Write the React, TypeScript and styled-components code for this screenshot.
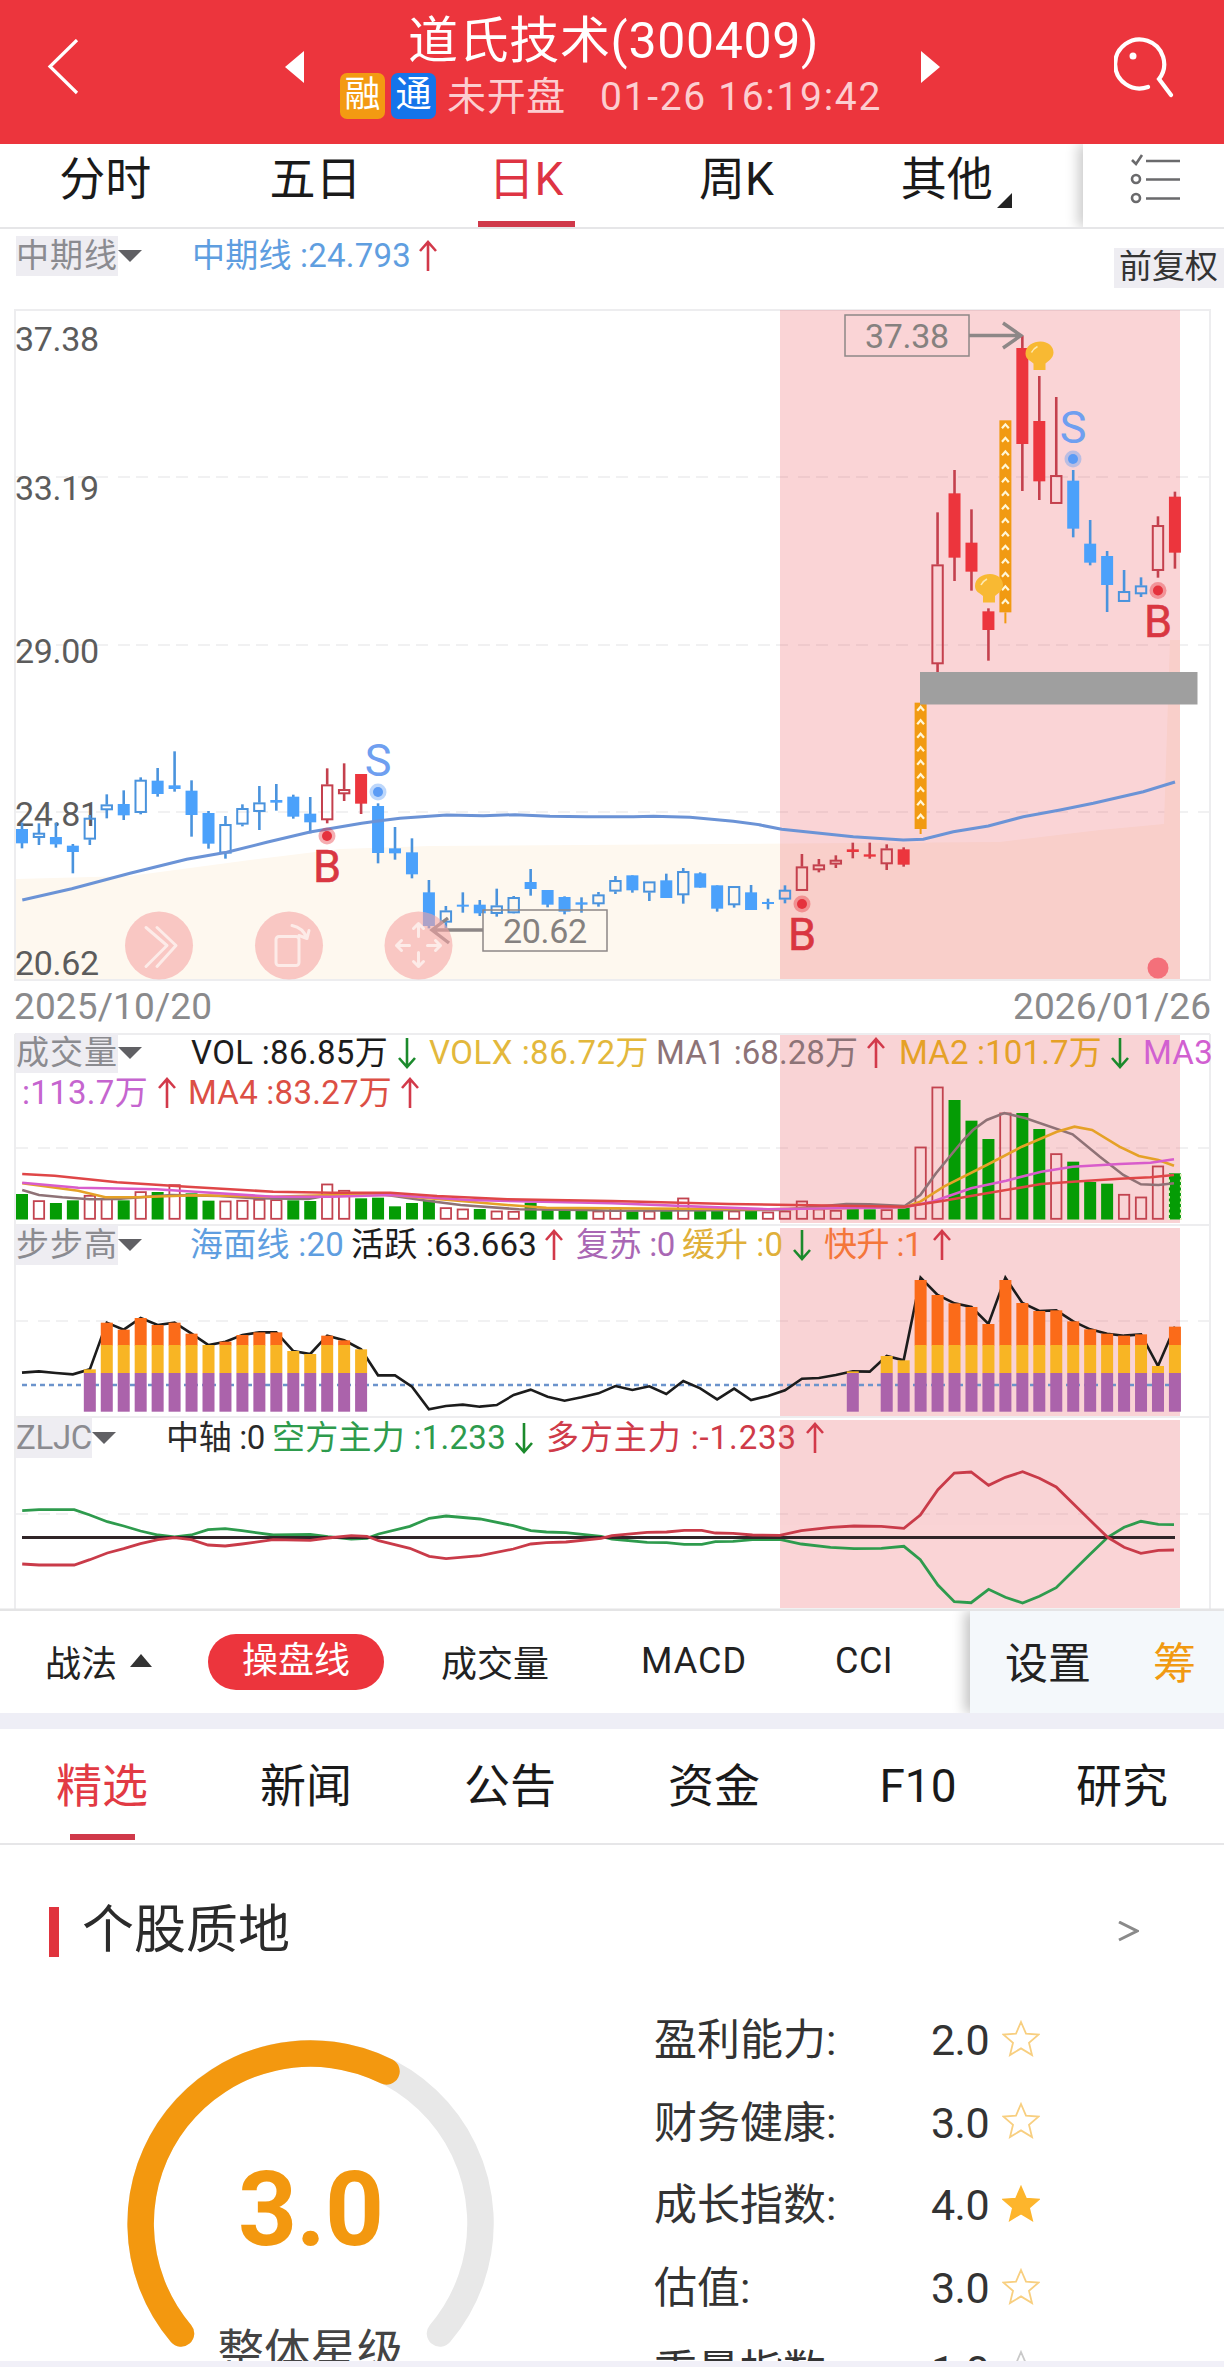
import React, { useLayoutEffect, useRef } from 'react';
import styled, { createGlobalStyle } from 'styled-components';

const GlobalStyle = createGlobalStyle`
  * { box-sizing: border-box; }
  body {
    margin: 0;
    background: #fff;
    color: #1c1c1c;
    font-family: Roboto, "Noto Sans CJK SC", sans-serif;
  }
  svg { display: block; }
`;

const RED = '#ec353d';
const LINE_RED = '#c93b49';
const BLUE = '#4ba1fb';
const GOLD = '#f19a12';
const GREEN = '#059c05';

/* ---------- text that spreads its letters over a given width ---------- */

const FitSpan = styled.span<{ $w: number; $after?: number }>`
  display: inline-block;
  flex: none;
  width: ${p => p.$w}px;
  margin-right: ${p => p.$after ?? 0}px;
  white-space: pre;
`;

function Fit({ w, after, children }: { w: number; after?: number; children: string }) {
  const inner = useRef<HTMLSpanElement>(null);
  useLayoutEffect(() => {
    const el = inner.current;
    if (!el) return;
    el.style.letterSpacing = '0px';
    const natural = el.getBoundingClientRect().width;
    el.style.letterSpacing = `${(w - natural) / children.length}px`;
  }, [w, children]);
  return (
    <FitSpan $w={w} $after={after}>
      <span ref={inner}>{children}</span>
    </FitSpan>
  );
}

/* ---------- page frame ---------- */

const Page = styled.main`
  width: 1224px;
  height: 2367px;
  overflow: hidden;
  display: flex;
  flex-direction: column;
  background: #fff;
`;

/* ---------- header ---------- */

const Header = styled.header`
  height: 144px;
  flex: none;
  background: ${RED};
  color: #fff;
  display: grid;
  grid-template-columns: 285px 19px 617px 19px 1fr;
`;

const HeaderBack = styled.div`
  padding: 39px 0 0 47px;
`;

const HeaderArrow = styled.div`
  padding-top: 51px;
`;

const HeaderCenter = styled.div`
  display: flex;
  flex-direction: column;
  padding-left: 36px;
`;

const StockTitle = styled.h1`
  margin: 6px 0 0 68px;
  font-size: 50px;
  line-height: 70px;
  height: 70px;
  font-weight: 400;
`;

const StatusRow = styled.div`
  display: flex;
  align-items: center;
  height: 46px;
  margin-top: -3px;
  font-size: 39px;
  line-height: 46px;
  color: #fccdd0;
`;

const Badge = styled.span<{ $bg: string }>`
  width: 45px;
  height: 46px;
  margin-right: 6px;
  border-radius: 7px;
  background: ${p => p.$bg};
  color: #fff;
  font-size: 36px;
  line-height: 45px;
  text-align: center;
`;

const StatusText = styled.span`
  display: flex;
  gap: 34px;
  margin-left: 5px;
  padding-top: 2px;
`;

const HeaderSearch = styled.div`
  padding: 35px 0 0 174px;
`;

/* ---------- period tabs ---------- */

const PeriodBar = styled.nav`
  height: 85px;
  flex: none;
  display: flex;
  border-bottom: 2px solid #e6e6e8;
`;

const PeriodTabs = styled.div`
  width: 1083px;
  display: flex;
  padding-right: 31px;
`;

const PeriodTab = styled.div<{ $on?: boolean }>`
  flex: 1;
  display: flex;
  flex-direction: column;
  align-items: center;
  justify-content: space-between;
  font-size: 46px;
  line-height: 70px;
  color: ${p => (p.$on ? '#de3443' : '#1a1a1a')};
  &::after {
    content: '';
    width: 97px;
    height: 6px;
    background: ${p => (p.$on ? '#d0394a' : 'transparent')};
  }
`;

const TabLabel = styled.span`
  position: relative;
`;

const Corner = styled.svg`
  position: absolute;
  left: 96px;
  top: 49px;
`;

const PeriodTools = styled.div`
  flex: 1;
  padding: 10px 0 0 47px;
  box-shadow: -5px 0 12px rgba(0, 0, 0, 0.2);
  clip-path: inset(0 0 0 -24px);
`;

/* ---------- chart area ---------- */

const ChartArea = styled.section`
  position: relative;
  height: 1382px;
  flex: none;
`;

const Drawing = styled.svg`
  position: absolute;
  left: 0;
  top: 0;
`;

const Legend = styled.div<{ $top: number; $pad: number }>`
  position: absolute;
  left: 0;
  top: ${p => p.$top}px;
  width: 1224px;
  height: 40px;
  padding-left: ${p => p.$pad}px;
  display: flex;
  align-items: center;
  font-size: 33px;
  line-height: 40px;
`;

const NameTag = styled.span<{ $w: number; $gap: number }>`
  display: flex;
  align-items: center;
  flex: none;
  width: ${p => p.$w}px;
  margin-right: ${p => p.$gap}px;
  height: 40px;
  background: #eeedf2;
  color: #8b8b90;
  white-space: nowrap;
`;

const TagCaret = styled.svg`
  flex: none;
`;

const Metric = styled.span<{ $c: string }>`
  display: flex;
  align-items: center;
  color: ${p => p.$c};
`;

const Adjust = styled.div`
  position: absolute;
  right: 0;
  top: 19px;
  width: 110px;
  height: 40px;
  padding-left: 5px;
  background: #eeedf2;
  color: #333;
  font-size: 33px;
  line-height: 38px;
`;

/* ---------- indicator bar ---------- */

const IndicatorBar = styled.nav`
  height: 102px;
  flex: none;
  display: flex;
  font-size: 36px;
  color: #222;
`;

const IndicatorList = styled.div`
  width: 970px;
  display: flex;
  align-items: center;
  padding-left: 45px;
`;

const Indicator = styled.span<{ $w: number }>`
  display: flex;
  align-items: center;
  gap: 13px;
  flex: none;
  width: ${p => p.$w}px;
  padding-bottom: 3px;
  white-space: nowrap;
`;

const Pill = styled.span`
  flex: none;
  width: 176px;
  height: 56px;
  margin-right: 57px;
  border-radius: 28px;
  background: ${RED};
  color: #fff;
  line-height: 54px;
  text-align: center;
`;

const IndicatorTools = styled.div`
  flex: 1;
  display: flex;
  align-items: center;
  gap: 62px;
  padding: 0 0 4px 35px;
  background: #f4f8fb;
  font-size: 43px;
  box-shadow: -5px 0 12px rgba(0, 0, 0, 0.24);
  clip-path: inset(0 0 0 -24px);
`;

const Chips = styled.span`
  color: ${GOLD};
`;

const Gap = styled.div`
  height: 16px;
  flex: none;
  background: #eeeef6;
`;

/* ---------- section tabs ---------- */

const SectionTabs = styled.nav`
  height: 116px;
  flex: none;
  display: flex;
  border-bottom: 2px solid #e6e6e8;
`;

const SectionTab = styled.div<{ $on?: boolean }>`
  flex: 1;
  display: flex;
  flex-direction: column;
  align-items: center;
  padding-top: 23px;
  font-size: 46px;
  line-height: 68px;
  color: ${p => (p.$on ? '#e23a44' : '#1a1a1a')};
  &::after {
    content: '';
    margin-top: 14px;
    width: 65px;
    height: 6px;
    background: ${p => (p.$on ? '#d0394a' : 'transparent')};
  }
`;

/* ---------- quality card ---------- */

const Quality = styled.section`
  height: 516px;
  flex: none;
  overflow: hidden;
`;

const QualityHead = styled.div`
  display: flex;
  align-items: center;
  height: 50px;
  margin: 62px 85px 0 49px;
`;

const Mark = styled.span`
  width: 10px;
  height: 50px;
  margin-right: 23px;
  background: #e0343e;
`;

const QualityTitle = styled.h2`
  margin: -3px 0 0;
  flex: 1;
  font-size: 52px;
  font-weight: 400;
  line-height: 50px;
  color: #2b2b2b;
`;

const QualityBody = styled.div`
  display: flex;
  padding: 40px 0 0 127px;
`;

const Gauge = styled.div`
  position: relative;
  width: 367px;
  height: 367px;
  margin-top: 43px;
  margin-right: 160px;
`;

const GaugeText = styled.div`
  position: absolute;
  inset: 0;
  display: flex;
  flex-direction: column;
  align-items: center;
`;

const Score = styled.strong`
  margin-top: 108px;
  font-size: 103px;
  line-height: 124px;
  font-weight: 700;
  letter-spacing: -1px;
  color: #f3980f;
`;

const ScoreName = styled.span`
  margin-top: 47px;
  font-size: 46.5px;
  line-height: 66px;
  color: #444;
`;

const ScoreList = styled.div`
  display: flex;
  flex-direction: column;
  padding-top: 2px;
  font-size: 43px;
  line-height: 83px;
  color: #333;
`;

const ScoreRow = styled.div`
  display: grid;
  grid-template-columns: 277px 71px 40px;
  align-items: center;
  height: 82.7px;
`;

const Star = styled.svg`
  margin-top: -4px;
`;

const BottomStrip = styled.div`
  flex: 1;
  background: #f1f0f8;
`;

/* ---------- chart data ---------- */

const cx = (i: number) => 22 + 16.955 * i;

type Kind = 'b' | 'bh' | 'r' | 'rh';
type Candle = [high: number, top: number, bottom: number, low: number, kind: Kind];

// Offsets are in thirds of a pixel below `origin`.
const segment = (origin: number, rows: Candle[]): Candle[] =>
  rows.map(([h, t, b, l, k]) => [origin + h / 3, origin + t / 3, origin + b / 3, origin + l / 3, k]);

const candles: Candle[] = [
  ...segment(700, [
    [368, 387, 430, 445, 'b'], [370, 399, 413, 435, 'bh'], [368, 411, 433, 443, 'b'], [432, 437, 456, 520, 'b'],
    [345, 354, 418, 435, 'bh'], [283, 314, 330, 355, 'bh'], [271, 312, 346, 360, 'b'], [232, 240, 338, 343, 'bh'],
    [204, 242, 282, 290, 'b'], [154, 256, 267, 275, 'b'], [241, 272, 345, 410, 'b'], [333, 339, 431, 446, 'b'],
    [348, 373, 460, 476, 'bh'], [313, 325, 373, 379, 'bh'], [258, 308, 335, 390, 'bh'], [252, 300, 308, 332, 'b'],
    [284, 290, 350, 356, 'b'], [291, 341, 367, 400, 'b'], [205, 254, 360, 370, 'rh'], [190, 268, 282, 303, 'rh'],
    [222, 222, 311, 342, 'r'], [310, 318, 459, 490, 'b'], [381, 445, 460, 479, 'b'], [415, 457, 523, 535, 'b'],
    [540, 577, 678, 685, 'b'], [618, 632, 667, 685, 'bh'], [577, 614, 620, 638, 'b'], [600, 614, 640, 648, 'b'],
    [566, 617, 641, 650, 'bh'], [588, 592, 639, 640, 'bh'], [507, 546, 567, 587, 'b'], [570, 570, 614, 622, 'b'],
    [589, 591, 635, 643, 'b'], [592, 607, 614, 638, 'b'], [576, 584, 612, 620, 'bh'], [528, 541, 574, 582, 'bh'],
    [526, 526, 571, 578, 'b'], [545, 545, 577, 603, 'bh'], [521, 541, 594, 594, 'b'], [504, 514, 585, 611, 'bh'],
    [517, 520, 563, 563, 'b'], [556, 556, 626, 635, 'b'], [559, 559, 615, 623, 'bh'], [555, 577, 630, 630, 'b'],
    [596, 606, 612, 628, 'b'], [556, 570, 598, 610, 'bh'],
  ]),
  ...segment(640, [
    [642, 680, 752, 752, 'rh'], [657, 674, 690, 697, 'rh'], [646, 660, 673, 684, 'rh'], [608, 628, 636, 655, 'r'],
    [608, 643, 650, 656, 'r'], [613, 626, 672, 690, 'rh'], [622, 628, 674, 680, 'r'], [188, 188, 567, 582, 'r'],
  ]),
  ...segment(300, [
    [637, 794, 1092, 1117, 'rh'], [510, 580, 773, 843, 'r'], [628, 728, 815, 872, 'r'], [925, 934, 990, 1082, 'r'],
    [361, 361, 937, 970, 'r'], [108, 144, 432, 573, 'r'], [228, 363, 544, 600, 'r'], [291, 526, 611, 611, 'rh'],
    [510, 542, 686, 712, 'b'], [660, 731, 788, 796, 'b'], [753, 768, 855, 936, 'b'], [810, 874, 905, 906, 'bh'],
    [832, 857, 882, 891, 'bh'], [649, 676, 812, 833, 'rh'], [575, 590, 758, 806, 'r'],
  ]),
];
const LIMIT_UP = [53, 58];

const volumeTops = [522, 541, 549, 541, 525, 535, 541, 514, 516, 493, 520, 542, 542, 540, 537, 538, 541,
  543, 491, 510, 535, 533, 559, 549, 541, 562, 566, 567, 572, 573, 548, 570, 570, 570, 572, 563, 572, 572, 572, 533,
  570, 570, 572, 570, 575, 572, 542, 566, 570, 551, 568, 568, 562, 380, 200, 240, 302, 357, 278, 279, 327, 400, 425,
  486, 491, 522, 530, 437, 460];
const greenDays = new Set([0, 2, 3, 6, 8, 10, 11, 16, 17, 20, 21, 22, 23, 24, 27, 30, 31, 32, 33, 36, 38, 40, 41, 43,
  49, 50, 52, 55, 56, 57, 59, 60, 62, 63, 64, 68]);

const step = [473, 469, 474, 478, 463, 323, 344, 309, 330, 323, 356, 390, 380, 360, 352, 352, 408, 417, 362, 376, 403,
  481, 481, 515, 583, 573, 569, 575, 570, 540, 524, 545, 557, 547, 535, 513, 525, 514, 537, 498, 520, 553, 521, 555,
  543, 526, 491, 489, 480, 469, 470, 423, 436, 188, 240, 265, 276, 327, 188, 264, 288, 286, 319, 343, 356, 362, 358,
  453, 335].map(v => 1215 + v / 3);
const hasStep = (i: number) => (i >= 4 && i <= 20) || i === 49 || i >= 51;

type Pts = [number, number][];
const K = 1568 / 612;
const wide = (y0: number, left: Pts, right: Pts) =>
  [...left.map(([x, y]) => [x / K, y0 + y / 3]), ...right.map(([x, y]) => [612 + x / K, y0 + y / 3])]
    .map(p => p.map(n => n.toFixed(1)).join(','))
    .join(' ');
const third = (x0: number, y0: number, pts: Pts) => pts.map(([x, y]) => `${(x0 + x / 3).toFixed(1)},${(y0 + y / 3).toFixed(1)}`).join(' ');

const trend = [
  third(0, 700, [[67, 600], [215, 566], [390, 520], [560, 478], [680, 457], [800, 427], [930, 396], [1085, 370], [1134, 363]]),
  third(400, 700, [[0, 355], [140, 345], [250, 347], [345, 344], [450, 349], [560, 350], [700, 350], [760, 349], [870, 352], [1000, 364], [1080, 374]]),
  third(760, 640, [[0, 555], [65, 568], [280, 590], [430, 600], [490, 598], [580, 575], [685, 558], [790, 530], [900, 510], [1000, 490], [1150, 455], [1245, 426]]),
].join(' ');

const ma1 = wide(1020,
  [[57, 510], [100, 525], [160, 532], [230, 538], [300, 537], [440, 525], [560, 528], [650, 535], [790, 537], [870, 520], [960, 520], [1080, 540], [1180, 555], [1330, 568], [1500, 570]],
  [[0, 572], [430, 570], [600, 552], [660, 553], [750, 558], [790, 525], [830, 460], [900, 360], [925, 330], [960, 300], [1005, 279], [1060, 295], [1180, 343], [1250, 410], [1310, 465], [1355, 493], [1400, 495], [1440, 490]]);
const ma2 = wide(1020,
  [[57, 490], [200, 512], [270, 532], [350, 532], [500, 526], [700, 530], [850, 525], [1000, 525], [1150, 540], [1300, 555], [1400, 563], [1568, 565]],
  [[0, 565], [400, 568], [750, 562], [790, 545], [850, 500], [960, 435], [1050, 380], [1140, 335], [1185, 320], [1230, 330], [1300, 380], [1350, 408], [1400, 420], [1440, 437]]);
const ma3 = wide(1020,
  [[57, 488], [200, 503], [400, 508], [500, 515], [700, 530], [850, 530], [1000, 525], [1200, 540]],
  [[0, 550], [400, 568], [750, 562], [820, 545], [920, 505], [1010, 482], [1100, 455], [1180, 440], [1300, 432], [1380, 428], [1440, 418]]);
const ma4 = wide(1020,
  [[57, 462], [140, 467], [300, 487], [480, 500], [700, 515], [850, 518], [1000, 518], [1120, 528], [1300, 538]],
  [[0, 543], [300, 552], [750, 560], [850, 542], [960, 520], [1100, 492], [1180, 485], [1300, 476], [1380, 472], [1440, 465]]);

const forceL: Pts = [[57, 887], [100, 884], [190, 884], [230, 900], [275, 920], [317, 933], [360, 948], [405, 960],
  [447, 966], [490, 960], [533, 944], [577, 941], [620, 947], [700, 960], [795, 958], [840, 965], [900, 972], [940, 970],
  [970, 957], [1050, 934], [1100, 910], [1143, 903], [1230, 912], [1315, 932], [1360, 947], [1400, 951], [1450, 953], [1540, 964]];
const forceR: Pts = [[0, 972], [90, 982], [140, 983], [185, 988], [230, 988], [265, 980], [310, 979], [360, 974],
  [430, 973], [485, 987], [560, 997], [620, 1001], [690, 1000], [748, 994], [790, 1034], [835, 1110], [877, 1160],
  [920, 1163], [965, 1123], [1008, 1147], [1052, 1164], [1095, 1144], [1138, 1118], [1225, 1018], [1270, 967],
  [1312, 937], [1355, 919], [1400, 928], [1440, 929]];
const mirror = (p: Pts): Pts => p.map(([x, y]) => [x, 1934 - y]);

/* ---------- chart pieces ---------- */

const Grid = ({ y }: { y: number }) => (
  <line x1="16" x2="1209" y1={y} y2={y} stroke="#f1f1f2" strokeWidth="2" strokeDasharray="12 10 12 6" />
);

function CandleBar({ i }: { i: number }) {
  const [h, t, b, l, k] = candles[i];
  const x = cx(i);
  if (LIMIT_UP.includes(i)) {
    const n = Math.floor((b - t) / 13.5);
    return (
      <g>
        <rect x={x - 6} y={t} width="12" height={b - t} fill={GOLD} />
        <rect x={x - 1} y={b} width="2" height={l - b} fill={GOLD} />
        {Array.from({ length: n }, (_, j) => (
          <path key={j} d={`M${x - 3.4} ${t + 8 + j * 13.5}l3.4 -4l3.4 4`} fill="none" stroke="#fff7d8" strokeWidth="2.2" />
        ))}
      </g>
    );
  }
  const hollow = k.endsWith('h');
  const red = k[0] === 'r';
  const wick = red ? '#c4404d' : '#4a93dd';
  return (
    <g>
      <line x1={x} x2={x} y1={h} y2={hollow ? t : l} stroke={wick} strokeWidth="2.6" />
      {hollow && <line x1={x} x2={x} y1={b} y2={l} stroke={wick} strokeWidth="2.6" />}
      {hollow ? (
        <rect x={x - 5.2} y={t + 0.7} width="10.4" height={b - t - 1.4} fill="none" stroke={wick} strokeWidth="2" />
      ) : (
        <rect x={x - 6} y={t} width="12" height={b - t} fill={red ? RED : BLUE} />
      )}
    </g>
  );
}

function Signal({ x, dot, text, kind }: { x: number; dot: number; text: number; kind: 'B' | 'S' }) {
  const c = kind === 'B' ? '#e5323d' : '#5b9bf5';
  const ink = kind === 'B' ? '#d93641' : '#6f9ff0';
  return (
    <g>
      <circle cx={x} cy={dot} r="8.5" fill={c} opacity=".4" />
      <circle cx={x} cy={dot} r="5" fill={c} />
      <text x={x} y={text} textAnchor="middle" fontSize="45" fill={ink} stroke={ink} strokeWidth={kind === 'B' ? 0.6 : 0}>
        {kind}
      </text>
    </g>
  );
}

const Bulb = ({ x, y }: { x: number; y: number }) => (
  <g transform={`translate(${x} ${y})`}>
    <path d="M-14 -2C-14 -10 -6 -14 1 -14C9 -14 14 -9 14 -3C14 3 8 6 6 8V14.5H-6V8C-9 5 -14 4 -14 -2Z" fill="#f8b933" />
    <path d="M-8 -3Q-6 -7 -2 -9" stroke="#fde9b0" strokeWidth="1.6" fill="none" />
  </g>
);

const Tool = ({ x, children }: { x: number; children: React.ReactNode }) => (
  <g transform={`translate(${x} 945.5)`}>
    <circle r="34" fill="#f4a4a4" opacity=".58" />
    <g fill="none" stroke="#fdebe8" strokeWidth="3" strokeLinecap="round" strokeLinejoin="round">{children}</g>
  </g>
);

const Arrow = ({ down, w = 18, l = 11, r = 14 }: { down?: boolean; w?: number; l?: number; r?: number }) => (
  <svg width={w + l + r} height="32" viewBox={`${-l - w / 2} 0 ${w + l + r} 32`}>
    <path
      d={down ? 'M0 1V30M-8 21L0 30L8 21' : 'M0 31V2M-8 11L0 2L8 11'}
      fill="none"
      stroke={down ? '#1b8a2c' : '#d2394a'}
      strokeWidth="2.6"
    />
  </svg>
);

function Tag({ name, w, gap }: { name: string; w: number; gap: number }) {
  return (
    <NameTag $w={w} $gap={gap}>
      <Fit w={w}>{name}</Fit>
      <TagCaret width="24" height="12">
        <path d="M0 0H24L12 12Z" fill="#606064" />
      </TagCaret>
    </NameTag>
  );
}

function Charts() {
  return (
    <Drawing width="1224" height="1382" viewBox="0 229 1224 1382">
      <g fill="none" stroke="#ededef" strokeWidth="2">
        <path d="M15 310H1210V980H15Z" />
        <path d="M15 1034H1210M15 1034V1610M1210 1034V1610M15 1225H1210M15 1417H1210" />
      </g>
      <path d="M0 1610H1224" stroke="#e4e4e5" strokeWidth="3" />
      <Grid y={477} />
      <Grid y={645} />
      <Grid y={812} />
      <Grid y={1148} />
      <Grid y={1321} />
      <Grid y={1514} />
      <polygon points="16,879 130,876 250,860 340,849 430,846 1000,842 1100,830 1164,824 1170,640 1180,640 1180,979 16,979" fill="#fef8ef" />
      <g fill="#ea5a62" opacity=".26">
        <rect x="780" y="310" width="400" height="669" />
        <rect x="780" y="1035" width="400" height="188" />
        <rect x="780" y="1228" width="400" height="188" />
        <rect x="780" y="1420" width="400" height="188" />
      </g>

      <g fontSize="34" fill="#5c5c5c">
        {[['37.38', 351], ['33.19', 500], ['29.00', 663], ['24.81', 826], ['20.62', 975]].map(([t, y]) => (
          <text key={t} x="15" y={y} textLength="84">{t}</text>
        ))}
      </g>

      {candles.map((_, i) => <CandleBar key={i} i={i} />)}
      <polyline points={trend} fill="none" stroke="#6b93d6" strokeWidth="3" />

      <g fill="none" stroke="#8d8787">
        <rect x="845" y="315" width="124" height="41" strokeWidth="1.5" />
        <path d="M969 335.5H1020M1003 323L1021 335.5L1003 348" strokeWidth="3.4" />
        <rect x="483" y="910" width="124" height="41" strokeWidth="1.5" />
        <path d="M483 930H432M448 918L432 930L449 943" strokeWidth="3.4" />
      </g>
      <g fontSize="34" fill="#85817f">
        <text x="865" y="348" textLength="84">37.38</text>
        <text x="503" y="943" textLength="84">20.62</text>
      </g>
      <g fontSize="37" fill="#8a8a8c">
        <text x="14" y="1019" textLength="198">2025/10/20</text>
        <text x="1013" y="1019" textLength="198">2026/01/26</text>
      </g>

      <Bulb x={1039.5} y={355.5} />
      <Bulb x={989} y={588} />
      <Signal x={327} dot={836} text={882} kind="B" />
      <Signal x={378} dot={792} text={776} kind="S" />
      <Signal x={802} dot={904} text={950} kind="B" />
      <Signal x={1073} dot={459} text={443} kind="S" />
      <Signal x={1158} dot={590.5} text={637} kind="B" />
      <circle cx="1158" cy="968" r="10.5" fill="#f4707a" />
      <rect x="920" y="672" width="277.5" height="32.5" fill="#9f9f9f" />

      <Tool x={159}>
        <path d="M-13 -18L8 0L-13 21M-2 -18L17 0L-2 21" />
      </Tool>
      <Tool x={289}>
        <rect x="-13" y="-9" width="23" height="29" rx="3" />
        <path d="M3 -20Q14 -18 18 -7M10 -10L18 -7L20 -15" />
      </Tool>
      <Tool x={418.5}>
        <path d="M0 -9V-22M-5 -17L0 -22L5 -17M0 7V21M-5 16L0 21L5 16M-9 0H-22M-17 -5L-22 0L-17 5M9 0H22M17 -5L22 0L17 5" />
      </Tool>

      {volumeTops.map((v, i) => {
        const x = cx(i);
        const y = 1020 + v / 3;
        if (greenDays.has(i)) return <rect key={i} x={x - 6} y={y} width="12" height={1219.5 - y} fill={GREEN} />;
        return <rect key={i} x={x - 5.2} y={y + 0.8} width="10.4" height={1218 - y} fill="none" stroke="#c2434f" strokeWidth="1.8" />;
      })}
      <path d={`M${cx(68) - 6} 1174V1220M${cx(68) + 6} 1174V1220`} stroke="#e2f2c4" strokeWidth="2" strokeDasharray="2.5 3" />
      <g fill="none" strokeWidth="2.6">
        <polyline points={ma1} stroke="#8f7276" />
        <polyline points={ma2} stroke="#e5a127" />
        <polyline points={ma3} stroke="#d85ccb" />
        <polyline points={ma4} stroke="#df4647" />
      </g>

      <line x1="22" x2="1175" y1="1385" y2="1385" stroke="#6c94cc" strokeWidth="2.4" strokeDasharray="5 4" />
      <polyline points={step.map((y, i) => `${cx(i)},${y}`).join(' ')} fill="none" stroke="#1c1c1c" strokeWidth="2.6" />
      {step.map((y, i) => {
        if (!hasStep(i)) return null;
        const x = cx(i) - 6;
        const top = Math.max(y, 1280);
        return (
          <g key={i}>
            {top < 1345 && <rect x={x} y={top} width="12" height={1345.5 - top} fill="#fb6b19" />}
            {top < 1373 && <rect x={x} y={Math.max(top, 1345)} width="12" height={1373 - Math.max(top, 1345)} fill="#f8b524" />}
            <rect x={x} y="1373" width="12" height="38.7" fill="#ab63ab" />
          </g>
        );
      })}

      <g fill="none" strokeWidth="2.8">
        <polyline points={wide(1215, forceL, forceR)} stroke="#2e9b4d" />
        <path d="M22 1537.5H1175" stroke="#302528" />
        <polyline points={wide(1215, mirror(forceL), mirror(forceR))} stroke={LINE_RED} />
      </g>
    </Drawing>
  );
}

const STAR = 'M19 2L24 13.6L36.5 14.6L27 22.8L30 35L19 28.4L8 35L11 22.8L1.5 14.6L14 13.6Z';

const scores: [string, string, 'on' | 'off' | 'grey'][] = [
  ['盈利能力:', '2.0', 'off'],
  ['财务健康:', '3.0', 'off'],
  ['成长指数:', '4.0', 'on'],
  ['估值:', '3.0', 'off'],
  ['重量指数:', '1.0', 'grey'],
];

export default function App() {
  return (
    <Page>
      <GlobalStyle />
      <Header>
        <HeaderBack>
          <svg width="32" height="56" fill="none" stroke="#fff" strokeWidth="3.2">
            <path d="M30 1L3 27.5L30 54" />
          </svg>
        </HeaderBack>
        <HeaderArrow>
          <svg width="19" height="32"><path d="M19 0V32L0 16Z" fill="#fff" /></svg>
        </HeaderArrow>
        <HeaderCenter>
          <StockTitle><Fit w={411}>道氏技术(300409)</Fit></StockTitle>
          <StatusRow>
            <Badge $bg="#f39a12">融</Badge>
            <Badge $bg="#1474ea">通</Badge>
            <StatusText>
              <Fit w={119}>未开盘</Fit>
              <Fit w={282}>01-26 16:19:42</Fit>
            </StatusText>
          </StatusRow>
        </HeaderCenter>
        <HeaderArrow>
          <svg width="19" height="32"><path d="M0 0V32L19 16Z" fill="#fff" /></svg>
        </HeaderArrow>
        <HeaderSearch>
          <svg width="64" height="66" fill="none" stroke="#fff" strokeWidth="4.2" strokeLinecap="round">
            <path d="M34 52A24.5 24.5 0 1 1 45 44L57 60" />
            <circle cx="19" cy="21" r="2.5" fill="#fff" strokeWidth="2" />
          </svg>
        </HeaderSearch>
      </Header>

      <PeriodBar>
        <PeriodTabs>
          <PeriodTab>分时</PeriodTab>
          <PeriodTab>五日</PeriodTab>
          <PeriodTab $on>日K</PeriodTab>
          <PeriodTab>周K</PeriodTab>
          <PeriodTab>
            <TabLabel>
              其他
              <Corner width="15" height="15"><path d="M15 0V15H0Z" fill="#222" /></Corner>
            </TabLabel>
          </PeriodTab>
        </PeriodTabs>
        <PeriodTools>
          <svg width="52" height="52" fill="none" stroke="#6a6a6c" strokeWidth="2.6">
            <path d="M2 6L6 10L12 1M16 7H50M16 25.5H50M16 44.5H50" />
            <circle cx="6" cy="25" r="4" />
            <circle cx="6" cy="44" r="4" />
          </svg>
        </PeriodTools>
      </PeriodBar>

      <ChartArea>
        <Charts />
        <Legend $top={7} $pad={16}>
          <Tag name="中期线" w={102} gap={74} />
          <Metric $c="#5f9ee0"><Fit w={219}>中期线 :24.793</Fit><Arrow l={8} /></Metric>
        </Legend>
        <Adjust>前复权</Adjust>

        <Legend $top={804} $pad={16}>
          <Tag name="成交量" w={102} gap={73} />
          <Metric $c="#1c1c1c"><Fit w={197}>VOL :86.85万</Fit><Arrow down l={10} r={13} /></Metric>
          <Metric $c="#e3b83c"><Fit w={220} after={7}>VOLX :86.72万</Fit></Metric>
          <Metric $c="#8d7377"><Fit w={202}>MA1 :68.28万</Fit><Arrow l={9} r={14} /></Metric>
          <Metric $c="#e5a127"><Fit w={203}>MA2 :101.7万</Fit><Arrow down l={9} r={14} /></Metric>
          <Metric $c="#d160d1"><Fit w={70}>MA3</Fit></Metric>
        </Legend>
        <Legend $top={844} $pad={22}>
          <Metric $c="#c565cf"><Fit w={126}>:113.7万</Fit><Arrow l={10} r={12} /></Metric>
          <Metric $c="#dc4f45"><Fit w={204}>MA4 :83.27万</Fit><Arrow l={9} /></Metric>
        </Legend>

        <Legend $top={996} $pad={16}>
          <Tag name="步步高" w={102} gap={72} />
          <Metric $c="#5f9ee0"><Fit w={154} after={7}>海面线 :20</Fit></Metric>
          <Metric $c="#1c1c1c"><Fit w={186}>活跃 :63.663</Fit><Arrow l={8} r={13} /></Metric>
          <Metric $c="#a967b4"><Fit w={99} after={7}>复苏 :0</Fit></Metric>
          <Metric $c="#e0b03a"><Fit w={101}>缓升 :0</Fit><Arrow down l={10} r={13} /></Metric>
          <Metric $c="#f4763a"><Fit w={98}>快升 :1</Fit><Arrow l={11} /></Metric>
        </Legend>

        <Legend $top={1189} $pad={16}>
          <Tag name="ZLJC" w={76} gap={74} />
          <Metric $c="#2a2a2a"><Fit w={99} after={7}>中轴 :0</Fit></Metric>
          <Metric $c="#2e9b4d"><Fit w={234}>空方主力 :1.233</Fit><Arrow down l={9} r={13} /></Metric>
          <Metric $c="#cf3b49"><Fit w={251}>多方主力 :-1.233</Fit><Arrow l={9} /></Metric>
        </Legend>
      </ChartArea>

      <IndicatorBar>
        <IndicatorList>
          <Indicator $w={163}>
            战法
            <svg width="22" height="13"><path d="M0 13H22L11 0Z" fill="#333" /></svg>
          </Indicator>
          <Pill>操盘线</Pill>
          <Indicator $w={200}>成交量</Indicator>
          <Indicator $w={194}><Fit w={106}>MACD</Fit></Indicator>
          <Indicator $w={60}><Fit w={58}>CCI</Fit></Indicator>
        </IndicatorList>
        <IndicatorTools>
          <span>设置</span>
          <Chips>筹</Chips>
        </IndicatorTools>
      </IndicatorBar>
      <Gap />

      <SectionTabs>
        <SectionTab $on>精选</SectionTab>
        <SectionTab>新闻</SectionTab>
        <SectionTab>公告</SectionTab>
        <SectionTab>资金</SectionTab>
        <SectionTab>F10</SectionTab>
        <SectionTab>研究</SectionTab>
      </SectionTabs>

      <Quality>
        <QualityHead>
          <Mark />
          <QualityTitle>个股质地</QualityTitle>
          <svg width="21" height="22" fill="none" stroke="#8a8a8a" strokeWidth="3">
            <path d="M1 1L19 10L1 19" />
          </svg>
        </QualityHead>
        <QualityBody>
          <Gauge>
            <svg width="367" height="367" fill="none" strokeWidth="26.5" strokeLinecap="round">
              <path d="M54 293.5A170 170 0 1 1 313 293.5" stroke="#e8e8e8" />
              <path d="M54 293.5A170 170 0 0 1 259.5 31.4" stroke="#f3980f" />
            </svg>
            <GaugeText>
              <Score>3.0</Score>
              <ScoreName>整体星级</ScoreName>
            </GaugeText>
          </Gauge>
          <ScoreList>
            {scores.map(([name, value, star]) => (
              <ScoreRow key={name}>
                <span>{name}</span>
                <Fit w={58}>{value}</Fit>
                <Star width="38" height="38">
                  <path
                    d={STAR}
                    fill={star === 'on' ? '#fdb52c' : 'none'}
                    stroke={star === 'grey' ? '#c9c9c9' : star === 'on' ? '#fdb52c' : '#f8cf80'}
                    strokeWidth="1.8"
                  />
                </Star>
              </ScoreRow>
            ))}
          </ScoreList>
        </QualityBody>
      </Quality>
      <BottomStrip />
    </Page>
  );
}
